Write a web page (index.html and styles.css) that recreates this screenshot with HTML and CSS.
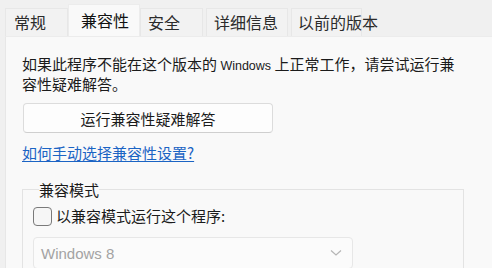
FILE: index.html
```html
<!DOCTYPE html>
<html lang="zh-CN">
<head>
    <meta charset="UTF-8">
    <meta name="viewport" content="width=device-width, initial-scale=1.0">
    <title>属性</title>
    <link rel="stylesheet" href="styles.css">
</head>
<body>

    <!-- 选项卡 -->
    <div class="tabs">
        <div class="tab tab-general">常规</div>
        <div class="tab tab-compat active">兼容性</div>
        <div class="tab tab-security">安全</div>
        <div class="tab tab-details">详细信息</div>
        <div class="tab tab-previous">以前的版本</div>
    </div>

    <!-- 兼容性页面 -->
    <div class="panel">
        <p class="intro">如果此程序不能在这个版本的 <span class="latin">Windows</span> 上正常工作，请尝试运行兼<br>容性疑难解答。</p>

        <button class="run-btn" type="button">运行兼容性疑难解答</button>

        <a class="help-link" href="#">如何手动选择兼容性设置?</a>

        <fieldset class="group">
            <legend>兼容模式</legend>
            <label class="check-row">
                <span class="checkbox"></span>
                以兼容模式运行这个程序:
            </label>
            <div class="select">
                <span>Windows 8</span>
                <svg class="chevron" width="12" height="8" viewBox="0 0 12 8">
                    <path d="M1 1.5 L6 6 L11 1.5" fill="none" stroke="#b5b5b5" stroke-width="1.2"/>
                </svg>
            </div>
        </fieldset>
    </div>

</body>
</html>
```

FILE: styles.css
```css
/* 整体 */
body {
    margin: 0;
    padding: 0;
    background: #f0f0f0;
    font-family: "Noto Sans CJK SC", "Liberation Sans", sans-serif;
    color: #1b1b1b;
    overflow: hidden;
}

/* 选项卡 */
.tabs {
    display: flex;
    align-items: flex-end;
    height: 36px;
    padding-left: 5px;
}

.tab {
    box-sizing: border-box;
    flex-shrink: 0;
    white-space: nowrap;
    height: 28px;
    padding-left: 8px;
    font-size: 16px;
    line-height: 27px;
    color: #2b2b2b;
    background: #f2f2f2;
    border: 1px solid #e7e7e7;
    border-bottom: none;
}

.tab-general { width: 63px; }
.tab-compat { width: 72px; }
.tab-security { width: 63px; margin-right: 3px; padding-left: 7px; }
.tab-details { width: 82px; margin-right: 3px; padding-left: 7px; }
.tab-previous { width: 71px; padding-left: 6px; }

.tab.active {
    height: 32px;
    padding-left: 12px;
    line-height: 30px;
    color: #111;
    background: #f9f9f9;
    border-color: #ececec;
}

/* 内容面板 */
.panel {
    margin-left: 5px;
    padding: 18px 12px 0 16px;
    background: #f9f9f9;
    border-left: 1px solid #e7e7e7;
    border-top: 1px solid #ececec;
    height: 240px;
    box-sizing: border-box;
}

.intro {
    margin: 0;
    font-size: 15px;
    line-height: 17px;
}

.intro .latin {
    font-family: "Liberation Sans", sans-serif;
    font-size: 12.5px;
}

.run-btn {
    display: block;
    width: 250px;
    height: 30px;
    margin: 11px 0 0 1px;
    background: #fdfdfd;
    border: 1px solid #dcdcdc;
    border-bottom-color: #cfcfcf;
    border-radius: 4px;
    font-family: inherit;
    font-size: 15px;
    color: #1b1b1b;
    padding: 0;
}

.help-link {
    display: inline-block;
    margin-top: 9px;
    font-size: 15px;
    line-height: 22px;
    color: #1b64c4;
    text-decoration: underline;
    text-underline-offset: 2px;
}

/* 兼容模式分组 */
.group {
    margin: 17px 16px 0 0;
    padding: 0 0 0 10px;
    border: 1px solid #e3e3e3;
    min-width: 0;
}

.group legend {
    padding: 0;
    margin-left: 6px;
    font-size: 15px;
    line-height: 17px;
    color: #1b1b1b;
}

.check-row {
    display: flex;
    align-items: center;
    gap: 4px;
    margin-top: 8px;
    font-size: 15px;
    line-height: 20px;
}

.checkbox {
    box-sizing: border-box;
    width: 19px;
    height: 19px;
    border: 1.5px solid #7a7a7a;
    border-radius: 4px;
    background: #f6f6f6;
}

.select {
    box-sizing: border-box;
    display: flex;
    align-items: center;
    justify-content: space-between;
    width: 320px;
    height: 32px;
    margin-top: 11px;
    padding: 0 10px 0 7px;
    background: #fbfbfb;
    border: 1px solid #e7e7e7;
    border-radius: 4px;
    font-family: "Liberation Sans", sans-serif;
    font-size: 15px;
    color: #a3a3a3;
}
```
